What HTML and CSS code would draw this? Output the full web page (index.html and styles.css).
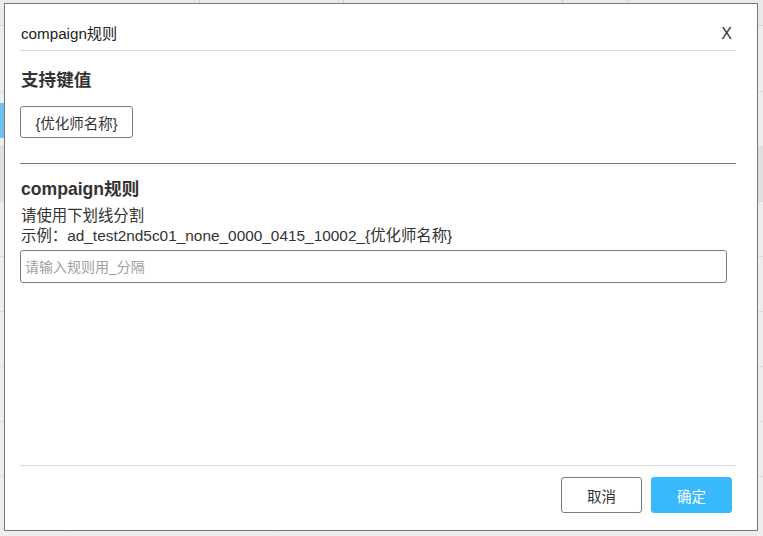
FILE: index.html
```html
<!DOCTYPE html>
<html lang="zh-CN">
<head>
<meta charset="utf-8">
<title>compaign规则</title>
<link rel="stylesheet" href="styles.css">
</head>
<body>
<div class="backdrop">
  <div class="bg-head">
    <span class="bg-col c1"></span>
    <span class="bg-col c2"></span>
    <span class="bg-col c3"></span>
    <span class="bg-col c4"></span>
    <span class="bg-col c5"></span>
  </div>
  <div class="bg-row tall"></div>
  <div class="bg-row"><span class="bg-mark"></span></div>
  <div class="bg-row dark"></div>
  <div class="bg-row"></div>
  <div class="bg-row"></div>
  <div class="bg-row"></div>
  <div class="bg-row"></div>
  <div class="bg-row"></div>
  <div class="bg-row foot">
    <span class="bg-col f1"></span>
    <span class="bg-col f2"></span>
  </div>
</div>

<div class="modal">
  <div class="modal-header">
    <span class="modal-title">compaign规则</span>
    <span class="modal-close">X</span>
  </div>
  <div class="modal-body">
    <h3 class="section-title first">支持键值</h3>
    <button class="tag-btn" type="button">{优化师名称}</button>
    <div class="divider"></div>
    <h3 class="section-title">compaign规则</h3>
    <p class="hint">请使用下划线分割</p>
    <p class="hint">示例：ad_test2nd5c01_none_0000_0415_10002_{优化师名称}</p>
    <input class="rule-input" type="text" placeholder="请输入规则用_分隔">
  </div>
  <div class="modal-footer">
    <button class="btn btn-cancel" type="button">取消</button>
    <button class="btn btn-ok" type="button">确定</button>
  </div>
</div>
</body>
</html>
```

FILE: styles.css
```css
* {
  box-sizing: border-box;
}

html, body {
  margin: 0;
  padding: 0;
}

body {
  width: 763px;
  height: 536px;
  overflow: hidden;
  background: #ededed;
  font-family: "Liberation Sans", Arial, "Noto Sans CJK SC", sans-serif;
  color: #333;
  position: relative;
}

/* ---------- backdrop (page behind the dialog) ---------- */
.backdrop {
  display: flex;
  flex-direction: column;
  width: 763px;
}

.bg-head {
  height: 26px;
  border-bottom: 1px solid #d6d6d6;
  background: #e9e9e9;
  display: flex;
}

.bg-col {
  display: block;
  height: 100%;
  border-right: 1px solid #d0d0d0;
}

.c1 { width: 200px; }
.c2 { width: 144px; }
.c3 { width: 219px; }
.c4 { width: 66px; }
.c5 { flex: 1; border-right: none; }

.bg-row {
  height: 55px;
  border-bottom: 1px solid #dcdcdc;
  flex-shrink: 0;
}

.bg-row.tall {
  height: 66px;
}

.bg-row.dark {
  background: #e0e0e0;
}

.bg-mark {
  display: block;
  width: 10px;
  height: 35px;
  margin-top: 11px;
  background: #6cc1f0;
}

.bg-row.foot {
  display: flex;
  border-bottom: none;
}

.f1 { width: 70px; }
.f2 { width: 209px; }

/* ---------- dialog ---------- */
.modal {
  position: absolute;
  left: 4px;
  top: 3px;
  width: 754px;
  height: 528px;
  background: #fff;
  border: 1px solid #787878;
  padding: 0 21px 0 15px;
  display: flex;
  flex-direction: column;
}

.modal-header {
  display: flex;
  justify-content: space-between;
  align-items: center;
  padding: 19px 4px 6px 1px;
  border-bottom: 1px solid #d9d9d9;
  line-height: 21px;
  font-size: 15.2px;
  color: #222;
}

.modal-close {
  font-size: 16px;
  color: #333;
}

.modal-body {
  flex: 1;
  display: flex;
  flex-direction: column;
  align-items: flex-start;
}

.section-title {
  margin: 12px 0 0 1px;
  font-size: 17.6px;
  font-weight: bold;
  line-height: 26px;
  color: #333;
}

.section-title.first {
  margin-top: 16px;
}

.tag-btn {
  margin-top: 13px;
  height: 32px;
  width: 113px;
  padding: 0;
  background: #fff;
  border: 1px solid #7a7a7a;
  border-radius: 3px;
  font-family: inherit;
  font-size: 14.5px;
  color: #333;
}

.divider {
  align-self: stretch;
  margin-top: 25px;
  height: 1px;
  background: #7a7a7a;
}

.hint {
  margin: 0 0 0 1px;
  font-size: 15.4px;
  line-height: 20px;
  color: #333;
}

.section-title + .hint {
  margin-top: 4px;
}

.rule-input {
  margin-top: 4px;
  width: 707px;
  height: 33px;
  padding: 0 4px;
  border: 1px solid #7a7a7a;
  border-radius: 3px;
  font-family: inherit;
  font-size: 14px;
  color: #333;
  outline: none;
}

.rule-input::placeholder {
  color: #a0a0a0;
}

.modal-footer {
  border-top: 1px solid #d9d9d9;
  padding: 11px 4px 17px 0;
  display: flex;
  justify-content: flex-end;
  gap: 9px;
}

.btn {
  width: 81px;
  height: 36px;
  border-radius: 3px;
  font-family: inherit;
  font-size: 14.5px;
  padding: 0;
}

.btn-cancel {
  background: #fff;
  border: 1px solid #7a7a7a;
  color: #333;
}

.btn-ok {
  background: #38b9fc;
  border: 1px solid #38b9fc;
  color: #fff;
}
```
